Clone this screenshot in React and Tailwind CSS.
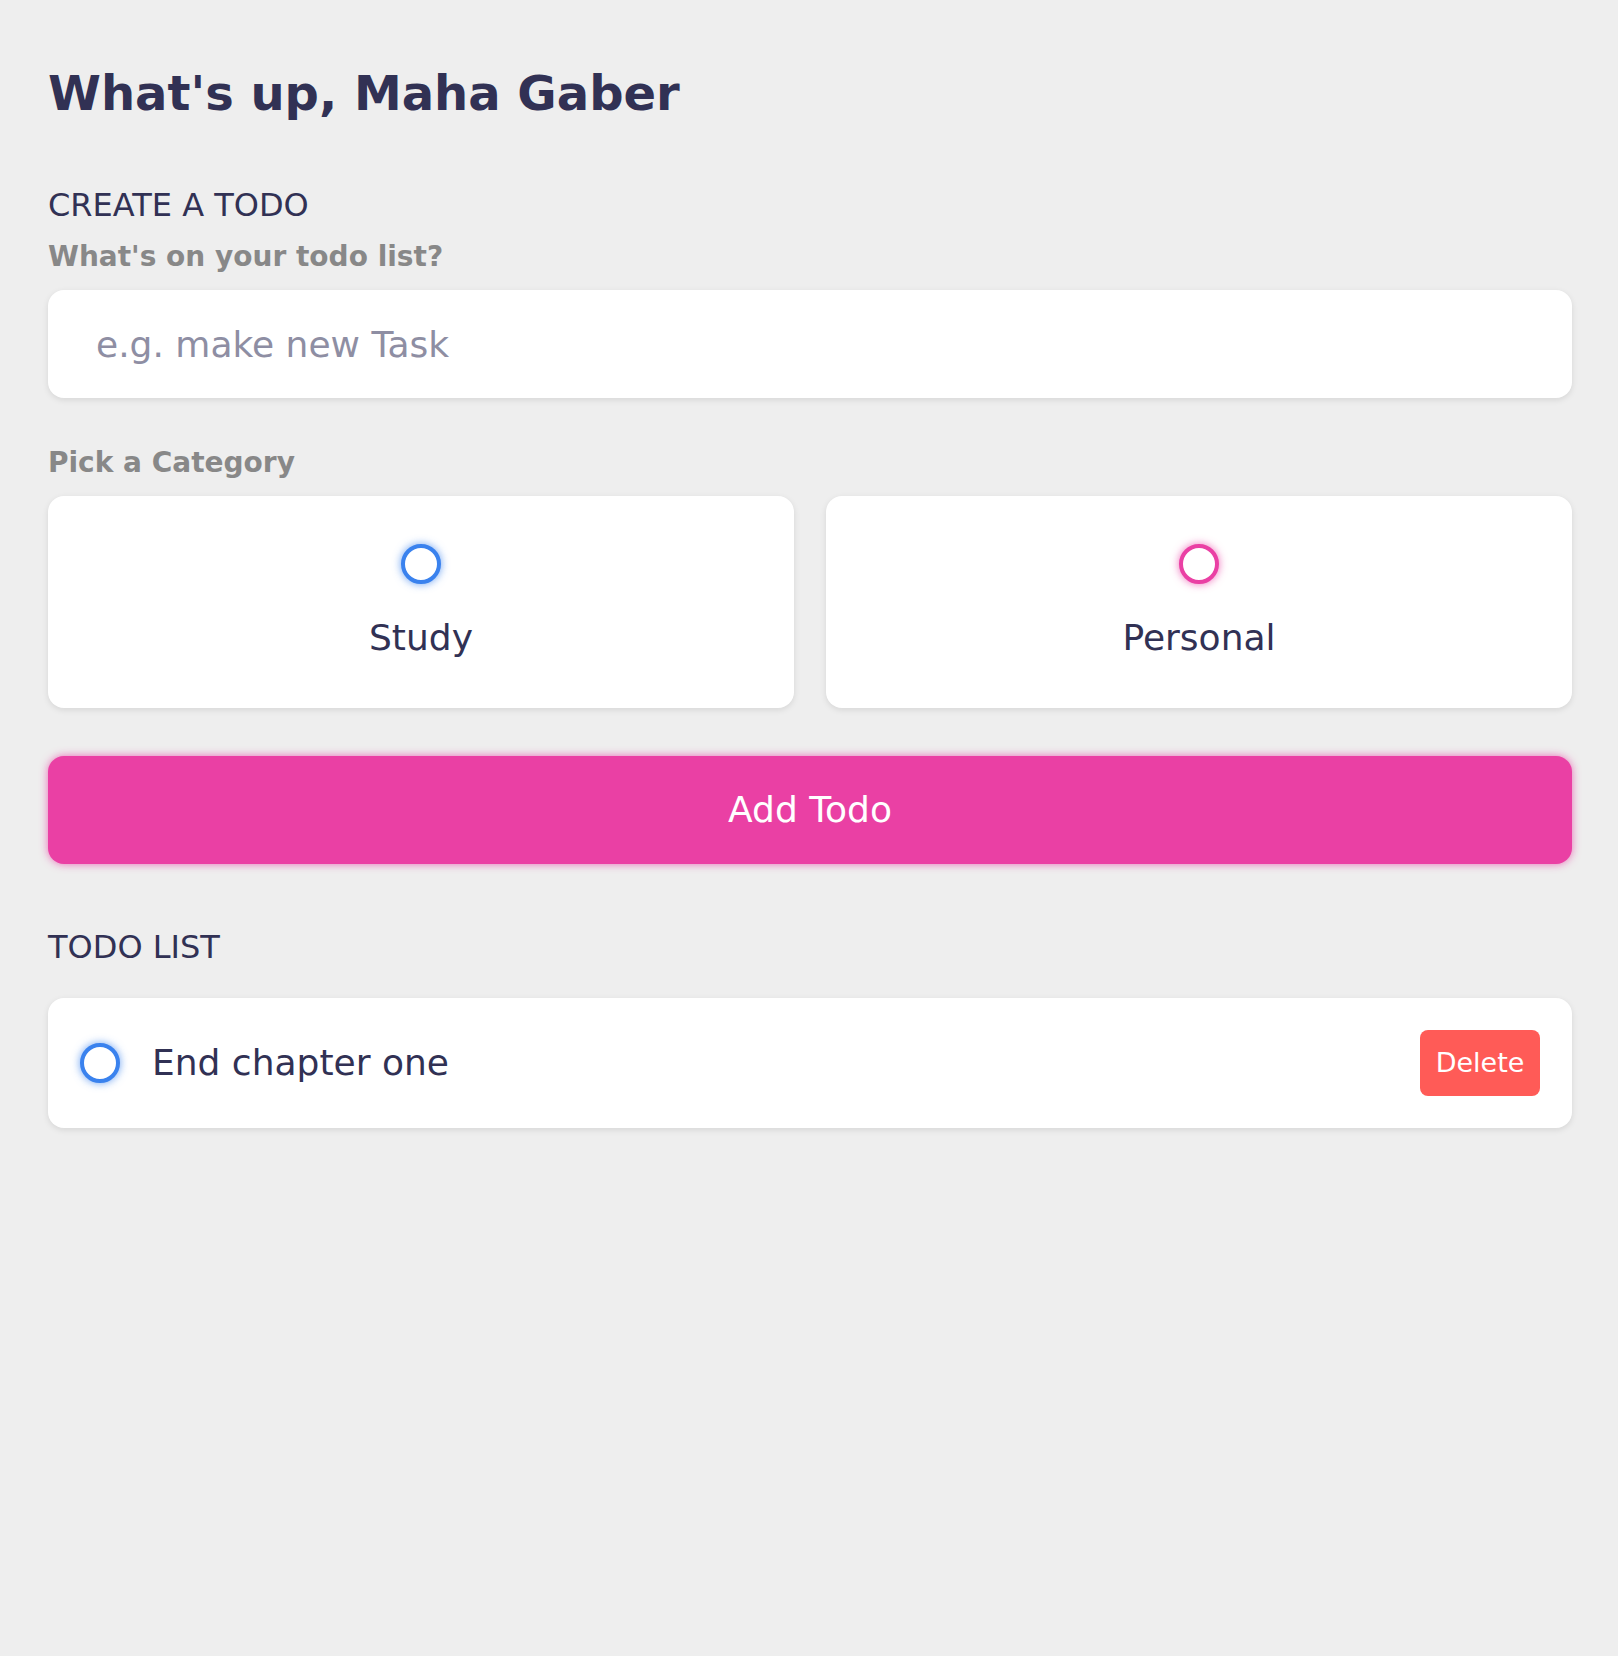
import { useState } from "react";

const card = "rounded-2xl bg-white shadow-[0_2px_6px_rgba(0,0,0,0.1)]";
const ring =
  "size-10 shrink-0 cursor-pointer appearance-none rounded-full border-4 bg-white";
const blueRing = "border-[#3a82ee] shadow-[0_0_8px_rgba(58,130,238,0.75)]";
const pinkRing = "border-[#ea40a4] shadow-[0_0_8px_rgba(234,64,164,0.75)]";

function Category({ value, label, tone }) {
  return (
    <label className={`flex cursor-pointer flex-col items-center px-8 py-12 ${card}`}>
      <input type="radio" name="category" value={value} className={`${ring} ${tone}`} />
      <span className="mt-8 text-4xl leading-[44px]">{label}</span>
    </label>
  );
}

export default function App() {
  const [name, setName] = useState("Maha Gaber");
  return (
    <main className="min-h-screen bg-[#eeeeee] pr-[46px] pl-12 font-['DejaVu_Sans',sans-serif] text-[#313154]">
      <section className="pt-16">
        <h1 className="flex text-5xl leading-[58px] font-bold">
          <label htmlFor="name" className="whitespace-pre">What's up, </label>
          <input
            id="name"
            value={name}
            onChange={(e) => setName(e.target.value)}
            className="h-[58px] min-w-0 flex-1 outline-none"
          />
        </h1>
      </section>
      <section className="mt-16">
        <h2 className="text-[32px] leading-[38px]">CREATE A TODO</h2>
        <form onSubmit={(e) => e.preventDefault()}>
          <label htmlFor="todo" className="my-4 block text-[28px] leading-[34px] font-bold text-[#888888]">
            What's on your todo list?
          </label>
          <input
            id="todo"
            placeholder="e.g. make new Task"
            className={`mb-12 block h-[108px] w-full px-12 text-4xl outline-none placeholder:text-[#8e8ea3] ${card}`}
          />
          <fieldset>
            <legend className="mb-4 text-[28px] leading-[34px] font-bold text-[#888888]">Pick a Category</legend>
            <div className="grid grid-cols-2 gap-8">
              <Category value="study" label="Study" tone={blueRing} />
              <Category value="personal" label="Personal" tone={pinkRing} />
            </div>
          </fieldset>
          <button
            type="submit"
            className="mt-12 block h-[108px] w-full cursor-pointer rounded-2xl bg-[#ea40a4] text-4xl text-white shadow-[0_0_8px_rgba(234,64,164,0.75)]"
          >
            Add Todo
          </button>
        </form>
      </section>
      <section className="mt-16 pb-16">
        <h2 className="text-[32px] leading-[38px]">TODO LIST</h2>
        <ul className="mt-8">
          <li className={`flex items-center p-8 ${card}`}>
            <input type="checkbox" aria-label="End chapter one" className={`${ring} ${blueRing}`} />
            <span className="ml-8 flex-1 text-4xl leading-[42px]">End chapter one</span>
            <button type="button" className="w-[120px] cursor-pointer rounded-lg bg-[#ff5b57] py-4 text-[27px] leading-[34px] text-white">
              Delete
            </button>
          </li>
        </ul>
      </section>
    </main>
  );
}
